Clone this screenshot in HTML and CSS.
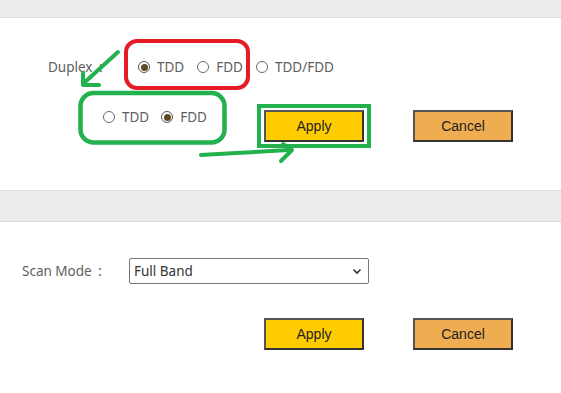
FILE: index.html
```html
<!DOCTYPE html>
<html>
<head>
<meta charset="utf-8">
<link rel="stylesheet" href="styles.css">
</head>
<body>
<div class="page">
  <div class="band band-top"></div>

  <section class="section sec-duplex">
    <div class="row duplex-row">
      <span class="label label-duplex">Duplex <span class="colon">:</span></span>
      <div class="radios">
        <span class="opt"><span class="radio checked"></span><span class="opt-text">TDD</span></span>
        <span class="opt"><span class="radio"></span><span class="opt-text">FDD</span></span>
        <span class="opt"><span class="radio"></span><span class="opt-text">TDD/FDD</span></span>
      </div>
    </div>
    <div class="btn-row">
      <button class="btn btn-apply">Apply</button>
      <button class="btn btn-cancel">Cancel</button>
    </div>
  </section>

  <div class="band band-mid"></div>

  <section class="section sec-scan">
    <div class="row scan-row">
      <span class="label label-scan">Scan Mode <span class="colon">:</span></span>
      <div class="select-wrap">
        <select class="select"><option>Full Band</option></select>
        <svg class="chev" width="10" height="7" viewBox="0 0 10 7"><path d="M1.5 1.5 L5 5 L8.5 1.5" fill="none" stroke="#333" stroke-width="1.6"/></svg>
      </div>
    </div>
    <div class="btn-row btn-row-2">
      <button class="btn btn-apply">Apply</button>
      <button class="btn btn-cancel">Cancel</button>
    </div>
  </section>

  <div class="annot-radios">
    <span class="opt"><span class="radio"></span><span class="opt-text">TDD</span></span>
    <span class="opt"><span class="radio checked"></span><span class="opt-text">FDD</span></span>
  </div>

  <svg class="annot" width="561" height="393" viewBox="0 0 561 393">
    <rect x="126" y="41" width="122" height="47" rx="11" fill="none" stroke="#e51c23" stroke-width="4"/>
    <rect x="80.5" y="93" width="144" height="49.5" rx="13" fill="none" stroke="#22b14c" stroke-width="4.5"/>
    <rect x="259" y="106" width="110" height="40" fill="none" stroke="#22b14c" stroke-width="4"/>
    <g fill="none" stroke="#22b14c" stroke-width="4" stroke-linecap="round" stroke-linejoin="round">
      <path d="M118 52 L85 82"/>
      <path d="M83 73 L83 85 L99 85"/>
      <path d="M201 155 Q240 153 289 150"/>
      <path d="M283 144 L292 150 L281 161"/>
    </g>
  </svg>
</div>
</body>
</html>
```

FILE: styles.css
```css
* { box-sizing: border-box; }
html, body { margin: 0; padding: 0; background: #fff; }
body {
  font-family: "Noto Sans", "Open Sans", sans-serif;
  font-size: 13.5px;
  color: #5e5e5e;
}
.page {
  position: relative;
  width: 561px;
  height: 393px;
  overflow: hidden;
}
.band {
  background: #ececec;
}
.band-top {
  height: 18px;
  border-bottom: 1px solid #dcdcdc;
}
.band-mid {
  height: 32px;
  border-top: 1px solid #dcdcdc;
  border-bottom: 1px solid #dcdcdc;
}
.section { display: flex; flex-direction: column; }
.sec-duplex { padding-top: 39px; padding-bottom: 48px; }
.row { display: flex; align-items: center; height: 20px; }
.duplex-row { padding-left: 48px; }
.colon { margin-left: 3px; }
.label-duplex { width: 90px; }
.radios { display: flex; align-items: center; gap: 13px; }
.opt { display: inline-flex; align-items: center; gap: 7px; line-height: 20px; }
.radio {
  width: 12px; height: 12px;
  border: 1px solid #6a6a6a;
  border-radius: 50%;
  background: #fff;
  display: inline-flex; align-items: center; justify-content: center;
}
.radio.checked { border-color: #555; }
.radio.checked::after {
  content: "";
  width: 7px; height: 7px;
  border-radius: 50%;
  background: #5f4b22;
}
.btn-row {
  display: flex;
  gap: 49px;
  padding-left: 264px;
  margin-top: 33px;
}
.btn {
  width: 100px; height: 32px;
  border: 2px solid #333;
  border-top-color: #555;
  border-left-color: #555;
  font-family: "Liberation Sans", Arial, sans-serif;
  font-size: 14px;
  color: #222;
  padding: 0;
  margin: 0;
}
.btn-apply { background: #ffcc00; }
.btn-cancel { background: #efac50; }

.sec-scan { padding-top: 36px; }
.scan-row { padding-left: 22px; height: 26px; }
.label-scan { width: 107px; }
.select-wrap { position: relative; width: 240px; height: 26px; }
.select {
  appearance: none;
  -webkit-appearance: none;
  width: 240px; height: 26px;
  border: 1px solid #767676;
  border-radius: 2px;
  background: #fff;
  font-family: "Noto Sans", "Open Sans", sans-serif;
  font-size: 13.5px;
  color: #333;
  padding: 0 0 0 4px;
  margin: 0;
}
.chev { position: absolute; right: 7px; top: 10px; }
.btn-row-2 { margin-top: 34px; }

.annot-radios {
  position: absolute;
  left: 103px;
  top: 107px;
  display: flex;
  gap: 12px;
}
.annot {
  position: absolute;
  left: 0; top: 0;
  pointer-events: none;
}
```
